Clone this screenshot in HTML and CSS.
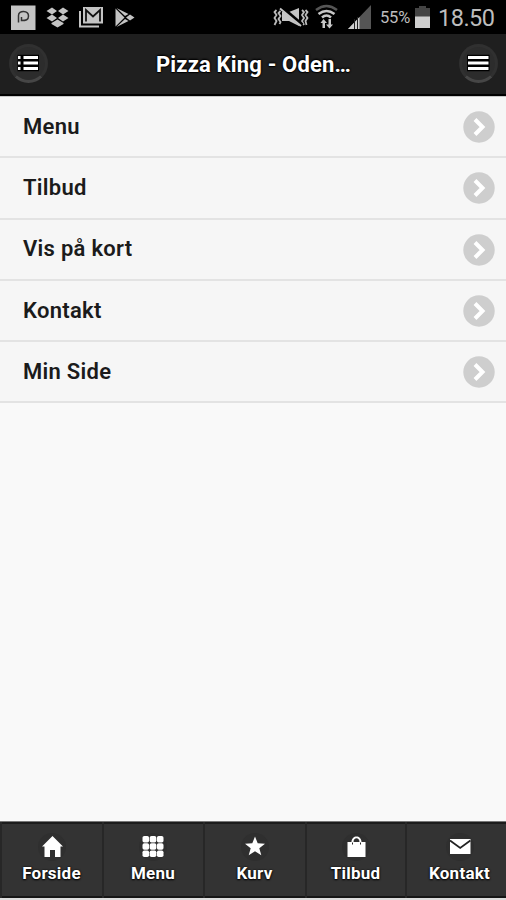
FILE: index.html
```html
<!DOCTYPE html>
<html lang="da">
<head>
<meta charset="utf-8">
<title>Pizza King</title>
<link rel="stylesheet" href="styles.css">
</head>
<body>
<div class="status">
  <svg class="notifications" width="136" height="34" viewBox="0 0 136 34">
    <path fill="#c4c4c4" d="M11 5.500h24.500v24.500H11z"/>
    <path fill="none" stroke="#333" stroke-width="1.500" d="M18.500 22.500V15.500C18.500 10 28.500 10 28.500 16C28.500 20 26 20.500 21.500 20.500V17"/>
    <g fill="#c4c4c4">
      <path d="M52 7.500l5 3.500-5 3.500-5.500-3.500zM63 7.500l5.500 3.500-5.500 3.500-5-3.500zM46.500 18l5.500-3.500 5 3.500-5 3.500zM58 18l5-3.500 5.500 3.500-5.500 3.500zM51.500 23l6-3.500 6 3.500v1l-6 3.500-6-3.500z"/>
      <path d="M79 11h2v14.500H99V27.500H79z"/>
      <path d="M83 7h20v16.500H83z"/>
      <path d="M115.500 8.500v18l9-9zM116.500 8l8.500 8 3.500-2zM116.500 27l8.500-8 3.500 2zM126 17.500l4-3 4.500 3-4.500 3z"/>
    </g>
    <path fill="none" stroke="#111" stroke-width="1.800" d="M86 21.500V10l7 6.500 7-6.500v11.500"/>
  </svg>
  <div class="system">
    <svg width="100" height="34" viewBox="272 0 100 34">
      <path fill="none" stroke="#bbb" stroke-width="1.800" d="M276.500 10l-2 2 2 3-2 3 2 3-2 4M280.500 11l-2 2 2 3-2 3 2 3-1 2M302 10l2 2-2 3 2 3-2 3 2 4M305.500 10l2 2-2 3 2 3-2 3 1 4"/>
      <path fill="#c4c4c4" d="M282 12h7l10-4v18l-10-5h-7z"/>
      <path stroke="#000" stroke-width="4" d="M281 7l21 18"/>
      <path stroke="#c4c4c4" stroke-width="2" d="M280 8.500l21 17.500"/>
      <path fill="none" stroke="#555" stroke-width="2.500" d="M316 10q10.500-8 21 0"/>
      <path fill="none" stroke="#c8c8c8" stroke-width="2.500" d="M318.500 14q8-6 16 0M322 17.500q4.500-4 9 0"/>
      <path fill="#c8c8c8" d="M323.500 19l3.500 4h-2v5h-2.500v-5h-2zM328.500 19h2.500v5.500h2l-3.500 4-3.500-4h2.500z"/>
      <path fill="#555" d="M371 5v24h-23z"/>
      <path fill="#d0d0d0" d="M359.500 17v12H348z"/>
      <path stroke="#222" d="M354.500 19v10M357.500 17v12"/>
    </svg>
    <span class="percent">55%</span>
    <svg class="battery" width="15" height="34" viewBox="0 0 15 34">
      <path fill="#444" d="M0 8h4V6h7v2h4v9H0z"/><path fill="#cfcfcf" d="M0 16.500h15V28H0z"/>
    </svg>
    <span class="clock">18.50</span>
  </div>
</div>
<header class="header">
  <a class="round"><svg width="24" height="20" viewBox="0 0 24 20">
    <path fill="none" stroke="#000" stroke-width="5.500" d="M.5 4.500h21.500M.5 10h21.500M.5 15.500h21.500"/>
    <path fill="none" stroke="#fff" stroke-width="3" d="M1 4.500h2.500M6.500 4.500H21M1 10h2.500M6.500 10H21M1 15.500h2.500M6.500 15.500H21"/></svg></a>
  <h1 class="title">Pizza King - Oden…</h1>
  <a class="round"><svg width="24" height="20" viewBox="0 0 24 20">
    <path fill="none" stroke="#000" stroke-width="5.500" d="M1 4.500h22.500M1 10h22.500M1 15.500h22.500"/>
    <path fill="none" stroke="#fff" stroke-width="3" d="M2 4.500h20.500M2 10h20.500M2 15.500h20.500"/></svg></a>
</header>
<main class="content">
  <ul class="list">
    <li class="row"><span>Menu</span><svg class="chevron" viewBox="0 0 32 32"><circle cx="16" cy="16" r="15.700"/><path d="M12 8.500l7.500 7.500-7.500 7.500"/></svg></li>
    <li class="row"><span>Tilbud</span><svg class="chevron" viewBox="0 0 32 32"><circle cx="16" cy="16" r="15.700"/><path d="M12 8.500l7.500 7.500-7.500 7.500"/></svg></li>
    <li class="row"><span>Vis på kort</span><svg class="chevron" viewBox="0 0 32 32"><circle cx="16" cy="16" r="15.700"/><path d="M12 8.500l7.500 7.500-7.500 7.500"/></svg></li>
    <li class="row"><span>Kontakt</span><svg class="chevron" viewBox="0 0 32 32"><circle cx="16" cy="16" r="15.700"/><path d="M12 8.500l7.500 7.500-7.500 7.500"/></svg></li>
    <li class="row"><span>Min Side</span><svg class="chevron" viewBox="0 0 32 32"><circle cx="16" cy="16" r="15.700"/><path d="M12 8.500l7.500 7.500-7.500 7.500"/></svg></li>
  </ul>
</main>
<nav class="tabs">
  <a class="tab"><svg class="icon" viewBox="0 0 28 28"><circle class="disc" cx="14" cy="14" r="14"/><path d="M14.500 3L4 13.500H6.500V24H12V17h5v7h5.500V13.500H25z"/></svg><span>Forside</span></a>
  <a class="tab"><svg class="icon" viewBox="0 0 28 28"><circle class="disc" cx="14" cy="14" r="14"/><g><rect x="3.500" y="3" width="6.600" height="6.600" rx="1.800"/><rect x="10.700" y="3" width="6.600" height="6.600" rx="1.800"/><rect x="17.900" y="3" width="6.600" height="6.600" rx="1.800"/><rect x="3.500" y="10.200" width="6.600" height="6.600" rx="1.800"/><rect x="10.700" y="10.200" width="6.600" height="6.600" rx="1.800"/><rect x="17.900" y="10.200" width="6.600" height="6.600" rx="1.800"/><rect x="3.500" y="17.400" width="6.600" height="6.600" rx="1.800"/><rect x="10.700" y="17.400" width="6.600" height="6.600" rx="1.800"/><rect x="17.900" y="17.400" width="6.600" height="6.600" rx="1.800"/></g></svg><span>Menu</span></a>
  <a class="tab"><svg class="icon" viewBox="0 0 28 28"><circle class="disc" cx="14" cy="14" r="14"/><path d="M14 3.500l2.700 6.800 7.300.4-5.700 4.500 2 7-6.300-4-6.300 4 2-7L4 10.700l7.300-.4z"/></svg><span>Kurv</span></a>
  <a class="tab"><svg class="icon" viewBox="0 0 28 28"><circle class="disc" cx="14" cy="14" r="14"/><path d="M5.500 9H9.500C9.500 1.500 19.500 1.500 19.500 9h4v15h-18zM11.500 9h6c0-5-6-5-6 0z" fill-rule="evenodd"/><path class="line" d="M10 10.500h1M18 10.500h1"/></svg><span>Tilbud</span></a>
  <a class="tab"><svg class="icon" viewBox="0 0 28 28"><circle class="disc" cx="14" cy="14" r="14"/><path d="M4 6h20.500v15H4z"/><path class="line" d="M4 7.500l10.200 7.500 10.200-7.500"/></svg><span>Kontakt</span></a>
</nav>
</body>
</html>
```
FILE: styles.css
```css
* { box-sizing: border-box; }
body {
  margin: 0;
  width: 506px;
  height: 900px;
  display: flex;
  flex-direction: column;
  overflow: hidden;
  font-family: Roboto, "Liberation Sans", sans-serif;
  background: #f9f9f9;
}
svg { display: block; flex: none; }
.status {
  height: 34px;
  flex: none;
  background: #000;
  color: #bdbdbd;
  display: flex;
  justify-content: space-between;
}
.system { display: flex; align-items: center; padding-right: 11px; }
.percent { font-size: 16.5px; letter-spacing: -.2px; margin-left: 8px; padding-top: 2px; line-height: 36px; width: 31px; }
.battery { margin-left: 4px; }
.clock { font-size: 23.5px; line-height: 36px; padding-top: 2px; width: 57px; margin-left: 8px; letter-spacing: -.5px; white-space: nowrap; }
.header {
  height: 62px;
  flex: none;
  background: #1f1f1f;
  border-bottom: 2px solid #000;
  display: flex;
  align-items: center;
  justify-content: space-between;
  padding: 0 8px 2px 9px;
}
.round {
  width: 39px;
  height: 39px;
  border-radius: 50%;
  background: #2c2c2c;
  border: 3px solid #303030;
  border-bottom-color: #464646;
  display: flex;
  align-items: center;
  justify-content: center;
}
.title {
  margin: 0;
  padding-top: 2px;
  font-size: 22px;
  font-weight: 700;
  letter-spacing: .17px;
  color: #fff;
  text-shadow: 0 0 2px #000, 0 -1px 2px #000, 0 1px 1px #000;
}
.content { flex: 1; }
.list { list-style: none; margin: 0; padding: 0; border-top: 1px solid #c8c8c8; }
.row {
  height: 61.3px;
  background: #f6f6f6;
  border-bottom: 2px solid #e3e3e3;
  padding: 0 11px 1px 23px;
  display: flex;
  align-items: center;
  justify-content: space-between;
  font-size: 22px;
  font-weight: 600;
  letter-spacing: .28px;
  color: #1b1b1b;
}
.chevron { width: 32px; height: 32px; margin-top: 2px; }
.chevron circle { fill: #cecece; }
.chevron path { fill: none; stroke: #fff; stroke-width: 4; }
.tabs {
  height: 79px;
  flex: none;
  background: #333;
  border-top: 1px solid #777;
  border-bottom: 2px solid #ddd;
  display: grid;
  grid-template-columns: 102px 101px 102px 100px 108px;
  box-shadow: inset 0 2px #1c1c1c, inset 0 -2px #161616;
}
.tab {
  border-left: 2px solid #272727;
  display: flex;
  flex-direction: column;
  align-items: center;
  padding: 11px 1px 0 0;
  color: #fff;
  font-size: 17px;
  font-weight: 700;
  letter-spacing: .25px;
  line-height: 24px;
  text-shadow: 0 0 2px #000, 0 1px 2px #000;
}
.icon { width: 28px; height: 28px; fill: #fff; }
.icon .disc { fill: #2f2f2f; }
.icon .line { fill: none; stroke: #222; stroke-width: 1.8; }
```
